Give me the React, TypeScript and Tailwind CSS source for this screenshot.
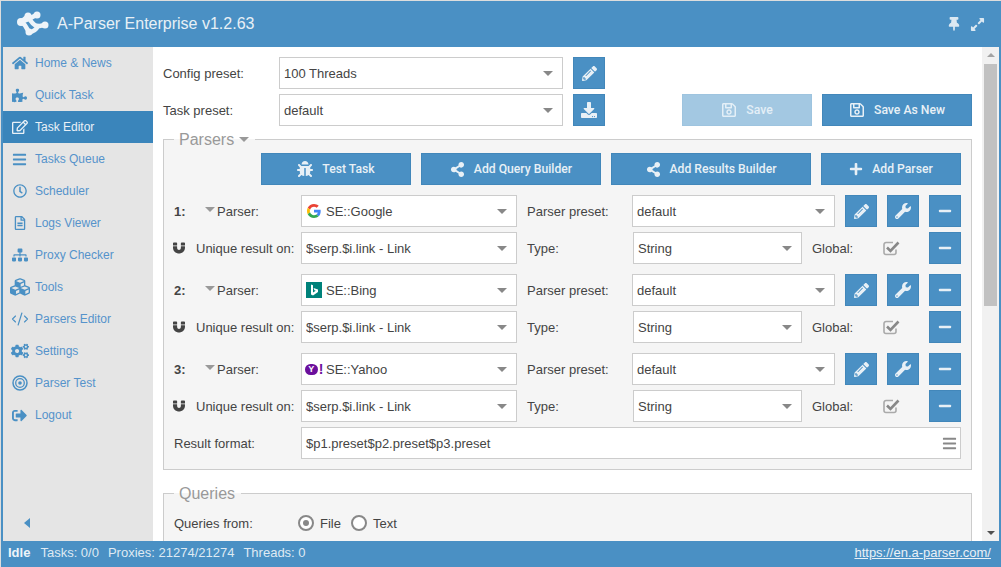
import React from 'react';
import {
  FaHome, FaPuzzlePiece, FaRegEdit, FaBars, FaRegClock, FaRegFileAlt, FaSitemap, FaCubes, FaCogs,
  FaSignOutAlt, FaPencilAlt, FaDownload, FaRegSave, FaShareAlt, FaPlus, FaWrench, FaMinus,
  FaMagnet, FaBug, FaThumbtack, FaExpandAlt,
} from 'react-icons/fa';
import { CodeXml } from 'lucide-react';

function TargetIcon() {
  return (
    <svg width="16" height="16" viewBox="0 0 16 16" fill="none" stroke="currentColor">
      <circle cx="8" cy="8" r="7" strokeWidth="1.500" />
      <circle cx="8" cy="8" r="4.300" strokeWidth="1.300" />
      <circle cx="8" cy="8" r="1.800" fill="currentColor" stroke="none" />
    </svg>
  );
}

const menu = [
  { label: 'Home & News', icon: <FaHome size={16} /> },
  { label: 'Quick Task', icon: <FaPuzzlePiece size={15} /> },
  { label: 'Task Editor', icon: <FaRegEdit size={16} />, active: true },
  { label: 'Tasks Queue', icon: <FaBars size={15} /> },
  { label: 'Scheduler', icon: <FaRegClock size={14} /> },
  { label: 'Logs Viewer', icon: <FaRegFileAlt size={14} /> },
  { label: 'Proxy Checker', icon: <FaSitemap size={16} /> },
  { label: 'Tools', icon: <FaCubes size={20} /> },
  { label: 'Parsers Editor', icon: <CodeXml size={18} strokeWidth={1.5} /> },
  { label: 'Settings', icon: <FaCogs size={18} /> },
  { label: 'Parser Test', icon: <TargetIcon /> },
  { label: 'Logout', icon: <FaSignOutAlt size={15} /> },
];

function Logo() {
  return (
    <svg width="34" height="26" viewBox="0 0 34 26" fill="none" className="shrink-0">
      <g stroke="#eef4f9" strokeWidth="4.500" strokeLinecap="round">
        <path d="M5 11 L12 5" />
        <path d="M12 5 C14 9 16 14 21 15 C24 15.500 26 14 29 14" />
        <path d="M21 4 C17 5 14 8 10 9 C7 10 6 11 5 11" />
        <path d="M5 11 C9 12 10 17 13 21" />
        <path d="M13 21 C17 21 20 19 22 15" />
      </g>
      <g fill="#eef4f9">
        <circle cx="5" cy="11" r="4" />
        <circle cx="12" cy="5" r="3.500" />
        <circle cx="21" cy="4" r="3.500" />
        <circle cx="13" cy="21" r="3.500" />
        <circle cx="29" cy="14" r="3.500" />
      </g>
    </svg>
  );
}

function CheckIcon() {
  return (
    <svg width="17" height="16" viewBox="0 0 17 16" fill="none" className="shrink-0">
      <path d="M13 9.500V12.500A2 2 0 0 1 11 14.500H3A2 2 0 0 1 1 12.500V4.500A2 2 0 0 1 3 2.500H10" stroke="#aaa" strokeWidth="1.600" />
      <path d="M4 7.500L7.500 11L15.500 2.500" stroke="#888" strokeWidth="2.600" />
    </svg>
  );
}

function GoogleIcon() {
  return (
    <svg width="14" height="14" viewBox="0 0 48 48" className="shrink-0">
      <path fill="#EA4335" d="M24 9.500c3.500 0 6.700 1.200 9.200 3.600l6.900-6.900C35.900 2.400 30.400 0 24 0 14.600 0 6.500 5.400 2.600 13.200l8 6.200C12.400 13.700 17.700 9.500 24 9.500z" />
      <path fill="#4285F4" d="M46.900 24.500c0-1.600-.1-3.100-.4-4.500H24v9h12.900c-.6 3-2.200 5.500-4.800 7.200l7.700 6c4.500-4.200 7.100-10.300 7.100-17.700z" />
      <path fill="#FBBC05" d="M10.500 28.600c-.5-1.400-.8-3-.8-4.600s.3-3.200.8-4.600l-8-6.200C.9 16.500 0 20.100 0 24s.9 7.500 2.600 10.800l7.900-6.200z" />
      <path fill="#34A853" d="M24 48c6.500 0 11.900-2.100 15.900-5.800l-7.700-6c-2.200 1.400-4.900 2.300-8.200 2.300-6.300 0-11.600-4.200-13.500-9.900l-8 6.200C6.500 42.600 14.600 48 24 48z" />
    </svg>
  );
}

function BingIcon() {
  return (
    <svg width="16" height="16" viewBox="0 0 16 16" className="shrink-0">
      <rect width="16" height="16" fill="#00827a" />
      <path fill="#fff" d="M5 2.500l2 .7v7.200l2.800-1.600-1.400-.6-.9-2.200 4.500 1.600v2.300L7 13.500l-2-1.100z" />
    </svg>
  );
}

function YahooIcon() {
  return (
    <span className="flex shrink-0 items-center">
      <span className="flex h-[11px] w-[13px] items-center justify-center rounded-full bg-[#6b0f9c] text-[9px] leading-none font-bold text-white">Y</span>
      <span className="ml-px text-[14px] leading-none font-bold text-[#6b0f9c]">!</span>
    </span>
  );
}

function Select({ className, icon, text }: { className: string; icon?: React.ReactNode; text: string }) {
  return (
    <div className={`flex h-8 shrink-0 items-center border border-[#ccc] bg-white pr-[9px] pl-1 ${className}`}>
      {icon && <span className="mr-1 flex w-[16px] shrink-0 items-center justify-center">{icon}</span>}
      <span className="flex-1 truncate pt-[2px] text-[#444]">{text}</span>
      <span className="h-0 w-0 border-x-[5px] border-t-[5px] border-x-transparent border-t-[#888]" />
    </div>
  );
}

function IconBtn({ children }: { children: React.ReactNode }) {
  return (
    <button className="flex h-8 w-8 shrink-0 items-center justify-center border border-[#4287ba] bg-[#4a90c4] text-[#e8f0f6]">
      {children}
    </button>
  );
}

function Btn({ className, icon, text, disabled }: { className: string; icon: React.ReactNode; text: string; disabled?: boolean }) {
  return (
    <button className={`flex h-8 shrink-0 items-center justify-center gap-[9px] border font-['Roboto',sans-serif] text-[12.200px] font-medium ${disabled ? 'border-[#9ec4df] bg-[#a3c8e2] text-[#e4eff7]' : 'border-[#4287ba] bg-[#4a90c4] text-[#e8f0f6]'} ${className}`}>
      {icon}
      {text}
    </button>
  );
}

function ParserRows({ num, icon, name }: { num: number; icon: React.ReactNode; name: string }) {
  return (
    <div className="flex flex-col gap-[5px]">
      <div className="flex items-center">
        <div className="flex w-[127px] shrink-0 items-center">
          <span className="w-[31px] pt-[2px] font-bold text-[#444]">{num}:</span>
          <span className="mb-1 h-0 w-0 border-x-[5px] border-t-[5px] border-x-transparent border-t-[#999]" />
          <span className="ml-[2px] pt-[2px]">Parser:</span>
        </div>
        <Select className="w-[216px]" icon={icon} text={name} />
        <span className="w-[115px] shrink-0 pt-[2px] pl-[10px]">Parser preset:</span>
        <Select className="w-[203px]" text="default" />
        <div className="ml-[10px] flex gap-[10px]">
          <IconBtn><FaPencilAlt size={15} /></IconBtn>
          <IconBtn><FaWrench size={16} /></IconBtn>
          <IconBtn><FaMinus size={14} /></IconBtn>
        </div>
      </div>
      <div className="flex items-center">
        <div className="flex w-[127px] shrink-0 items-center">
          <FaMagnet size={12} className="mr-[11px] ml-[-1px] text-[#444]" />
          <span className="whitespace-nowrap pt-[2px]">Unique result on:</span>
        </div>
        <Select className="w-[216px]" text="$serp.$i.link - Link" />
        <span className="w-[116px] shrink-0 pt-[2px] pl-[10px]">Type:</span>
        <Select className="w-[169px]" text="String" />
        <span className="w-[81px] shrink-0 pt-[2px] pl-[10px]">Global:</span>
        <CheckIcon />
        <div className="ml-auto"><IconBtn><FaMinus size={14} /></IconBtn></div>
      </div>
    </div>
  );
}

function Radio({ checked, label }: { checked?: boolean; label: string }) {
  return (
    <span className="flex items-center gap-[6px]">
      <span className="flex h-[16px] w-[16px] items-center justify-center rounded-full border-2 border-[#888] bg-white">
        {checked && <span className="h-[6px] w-[6px] rounded-full bg-[#888]" />}
      </span>
      <span className="pt-[2px]">{label}</span>
    </span>
  );
}

export default function App() {
  return (
    <div className="h-[567px] w-[1001px] overflow-hidden bg-[#ddd] pt-px pl-px font-['Liberation_Sans',sans-serif] text-[13px] text-[#444]">
      <div className="flex h-full flex-col bg-[#4a90c4] pr-[2px] pl-[2px]">
        {/* Header */}
        <header className="flex h-[46px] shrink-0 items-center pr-[14px] pl-[13px] text-[#eaf1f7]">
          <Logo />
          <h1 className="ml-[7px] text-[16px] text-[#e8f0f6]">A-Parser Enterprise v1.2.63</h1>
          <div className="ml-auto flex items-center gap-[9px] text-[#dbe8f2]">
            <FaThumbtack size={14} />
            <FaExpandAlt size={15} />
          </div>
        </header>

        <div className="flex min-h-0 flex-1">
          {/* Sidebar */}
          <nav className="flex w-[150px] shrink-0 flex-col bg-[#e5e5e5] text-[12px] text-[#5593cb]">
            {menu.map((item) => (
              <div
                key={item.label}
                className={`flex h-8 shrink-0 items-center ${item.active ? 'bg-[#3a85bb] text-[#eaf1f7]' : ''}`}
              >
                <span className={`flex w-[32px] shrink-0 justify-center pl-px ${item.active ? '' : 'text-[#4a90c4]'}`}>{item.icon}</span>
                {item.label}
              </div>
            ))}
            <div className="mt-auto mb-[13px] ml-[21px] h-0 w-0 border-y-[5px] border-r-[6px] border-y-transparent border-r-[#4a90c4]" />
          </nav>

          {/* Main */}
          <main className="min-w-0 flex-1 overflow-hidden bg-white pt-[10px] pl-[10px]">
            <div className="flex flex-col gap-[5px] pr-[10px]">
              <div className="flex items-center">
                <span className="w-[116px] shrink-0 pt-[2px]">Config preset:</span>
                <Select className="w-[284px]" text="100 Threads" />
                <div className="ml-[10px]"><IconBtn><FaPencilAlt size={15} /></IconBtn></div>
              </div>
              <div className="flex items-center">
                <span className="w-[116px] shrink-0 pt-[2px]">Task preset:</span>
                <Select className="w-[284px]" text="default" />
                <div className="ml-[10px]"><IconBtn><FaDownload size={16} /></IconBtn></div>
                <div className="ml-auto flex gap-[10px]">
                  <Btn className="w-[130px]" disabled icon={<FaRegSave size={16} />} text="Save" />
                  <Btn className="w-[150px]" icon={<FaRegSave size={16} />} text="Save As New" />
                </div>
              </div>
            </div>

            <fieldset className="mt-[3px] mr-[10px] flex flex-col gap-[10px] border border-[#ccc] bg-[#f5f5f5] pr-[10px] pb-[10px] pl-[10px]">
              <legend className="flex h-5 items-center pr-[6px] pl-[5px] text-[16px] text-[#999]">
                <span className="pt-[2px]">Parsers</span>
                <span className="mt-px ml-[5px] h-0 w-0 border-x-[5px] border-t-[5px] border-x-transparent border-t-[#999]" />
              </legend>
              <div className="mt-1 flex justify-end gap-[10px]">
                <Btn className="w-[150px]" icon={<FaBug size={16} />} text="Test Task" />
                <Btn className="w-[180px]" icon={<FaShareAlt size={15} />} text="Add Query Builder" />
                <Btn className="w-[200px]" icon={<FaShareAlt size={15} />} text="Add Results Builder" />
                <Btn className="w-[140px]" icon={<FaPlus size={14} />} text="Add Parser" />
              </div>
              <ParserRows num={1} icon={<GoogleIcon />} name="SE::Google" />
              <ParserRows num={2} icon={<BingIcon />} name="SE::Bing" />
              <div className="flex flex-col gap-[5px]">
                <ParserRows num={3} icon={<YahooIcon />} name="SE::Yahoo" />
                <div className="flex items-center">
                  <span className="w-[127px] shrink-0 pt-[2px]">Result format:</span>
                  <div className="flex h-8 flex-1 items-center border border-[#ccc] bg-white pr-[3px] pl-1">
                    <span className="flex-1 pt-[2px]">$p1.preset$p2.preset$p3.preset</span>
                    <FaBars size={15} className="text-[#888]" />
                  </div>
                </div>
              </div>
            </fieldset>

            <fieldset className="mt-[13px] mr-[10px] border border-[#ccc] bg-[#f5f5f5] pr-[10px] pb-[9px] pl-[10px]">
              <legend className="flex h-5 items-center pr-[6px] pl-[5px] text-[16px] text-[#999]">
                <span className="pt-[2px]">Queries</span>
              </legend>
              <div className="mt-1 flex h-8 items-center">
                <span className="w-[124px] shrink-0 pt-[2px]">Queries from:</span>
                <div className="flex gap-[10px]">
                  <Radio checked label="File" />
                  <Radio label="Text" />
                </div>
              </div>
            </fieldset>
          </main>

          {/* Scrollbar */}
          <div className="flex w-[17px] shrink-0 flex-col items-center bg-[#f1f1f1]">
            <span className="mt-[6px] h-0 w-0 border-x-[4px] border-b-[4px] border-x-transparent border-b-[#a3a3a3]" />
            <div className="mt-[7px] h-[242px] w-[13px] bg-[#c1c1c1]" />
            <span className="mt-auto mb-[6px] h-0 w-0 border-x-[4px] border-t-[4px] border-x-transparent border-t-[#505050]" />
          </div>
        </div>

        {/* Status bar */}
        <footer className="flex h-[26px] shrink-0 items-center pr-2 pb-[2px] pl-[5px] text-[13px] text-[#dfeaf3]">
          <b className="mr-[10px] text-[#eef4f9]">Idle</b>
          <span className="mr-[9px]">Tasks: 0/0</span>
          <span className="mr-[9px]">Proxies: 21274/21274</span>
          <span>Threads: 0</span>
          <a className="ml-auto text-[#eaf1f7] underline">https://en.a-parser.com/</a>
        </footer>
      </div>
    </div>
  );
}
